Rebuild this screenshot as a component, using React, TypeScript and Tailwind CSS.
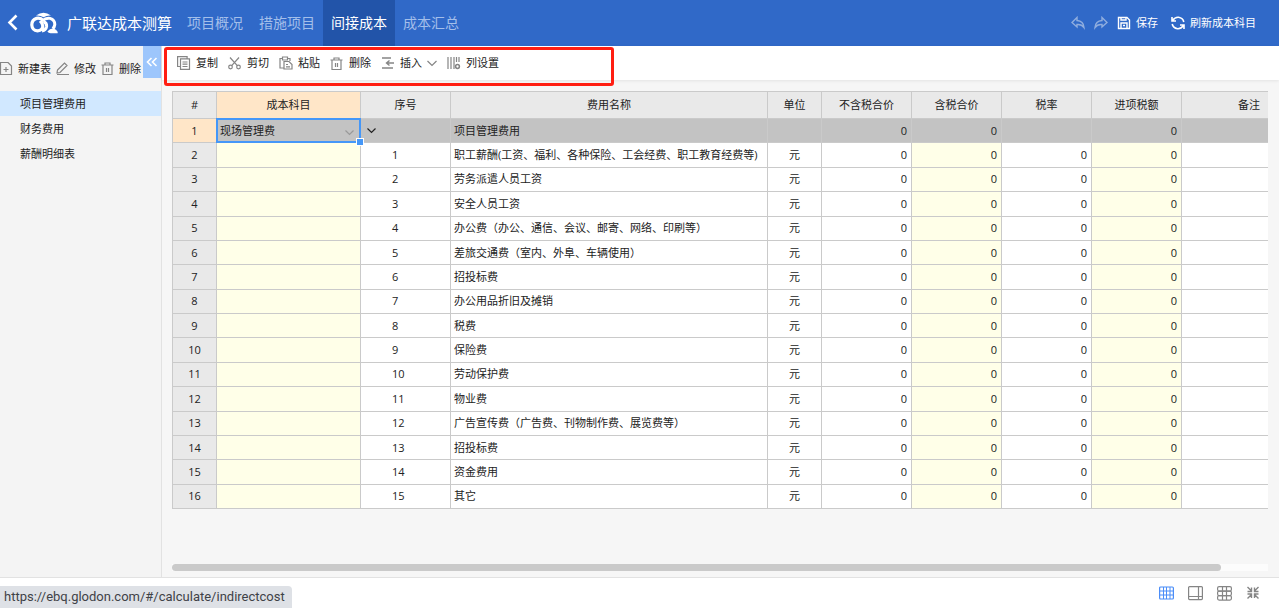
import React from "react";

type IconProps = { children: React.ReactNode; className?: string; box?: string };

function Icon({ children, className = "size-[14px]", box = "0 0 14 14" }: IconProps) {
  return (
    <svg viewBox={box} fill="none" stroke="currentColor" strokeWidth="1.2" className={"shrink-0 " + className} aria-hidden="true">
      {children}
    </svg>
  );
}

const Trash = () => (
  <Icon className="size-[13px]" box="0 0 13 13">
    <path d="M0.5 3h12M4 3V1h5v2M2 3v9.500h9V3M5.500 6v4M7.500 6v4" />
  </Icon>
);

const Logo = () => (
  <svg viewBox="0 0 28 22" fill="none" stroke="#fff" className="h-[22px] w-[28px] shrink-0" aria-hidden="true">
    <path d="M6 3.600Q13.500 -2 21 3.600Q17 3.200 13.600 5.200Q10 3.200 6 3.600Z" fill="#fff" stroke="none" />
    <path d="M13.800 9Q10.500 5.500 6.500 6.400 1.800 7.800 1.800 13 2.200 18.500 7.500 18.800 12.800 18.500 12.800 14 12.600 11 10 8.800" strokeWidth="3.200" />
    <path d="M12.500 8.800Q16 5.500 20 6.400 24.800 7.800 24.800 12.500 24.500 15 22.800 16.800M13.500 9.500Q17 11 16.600 14.500 16 18.300 12 19" strokeWidth="3" />
    <path d="M17.400 19.500Q21.500 14.800 25.500 17.500Q28.300 19.600 27.600 21.200H20.500Q18.500 21.200 17.400 19.500Z" fill="#fff" stroke="none" />
  </svg>
);

const tabs = ["项目概况", "措施项目", "间接成本", "成本汇总"];
const sheets = ["项目管理费用", "财务费用", "薪酬明细表"];

const names = [
  "职工薪酬(工资、福利、各种保险、工会经费、职工教育经费等)",
  "劳务派遣人员工资",
  "安全人员工资",
  "办公费（办公、通信、会议、邮寄、网络、印刷等）",
  "差旅交通费（室内、外阜、车辆使用）",
  "招投标费",
  "办公用品折旧及摊销",
  "税费",
  "保险费",
  "劳动保护费",
  "物业费",
  "广告宣传费（广告费、刊物制作费、展览费等）",
  "招投标费",
  "资金费用",
  "其它",
];

const headings = ["#", "成本科目", "序号", "费用名称", "单位", "不含税合价", "含税合价", "税率", "进项税额", "备注"];

const cell = "border-r border-b border-[#cacaca] p-0";
const num = cell + " pr-1 text-right";

function Header() {
  return (
    <header className="flex h-[46px] shrink-0 items-center bg-[#3069c8] text-white">
      <button aria-label="返回" className="ml-[7px] flex">
        <Icon className="h-[18px] w-[12px]" box="0 0 12 18">
          <path d="M9.500 1.500 2.500 8.500l7 7" strokeWidth="2.600" />
        </Icon>
      </button>
      <div className="ml-[11px] flex items-center gap-[9px]">
        <Logo />
        <h1 className="text-[15px] whitespace-nowrap">广联达成本测算</h1>
      </div>
      <nav className="ml-[7px] flex h-full text-[14px] whitespace-nowrap">
        {tabs.map((t) => (
          <a
            key={t}
            href="#"
            className={t === "间接成本" ? "flex items-center bg-[#2254a9] px-2" : "flex items-center px-2 text-[#a4bfea]"}
          >
            {t}
          </a>
        ))}
      </nav>
      <div className="mr-[23px] ml-auto flex items-center gap-[9px] text-[11px] whitespace-nowrap">
        <button aria-label="撤销" className="text-[#8fadde]">
          <Icon>
            <path d="M6 1.500 1 6.500l5 4.500V8.500q4.500-.5 7 3Q12.500 5 6 4.500Z" strokeWidth="1.400" />
          </Icon>
        </button>
        <button aria-label="重做" className="text-[#8fadde]">
          <Icon>
            <path d="M8 1.500 13 6.500 8 11V8.500q-4.500-.5-7 3Q1.500 5 8 4.500Z" strokeWidth="1.400" />
          </Icon>
        </button>
        <button className="flex items-center gap-[5px]">
          <Icon>
            <path d="M2 1.500h8l2.500 2.500v8.500H1.500V1.500ZM4 1.500V4h5V1.500M4 12.500V7h6v5.500M6 9.500h2" strokeWidth="1.400" />
          </Icon>
          保存
        </button>
        <button className="ml-1 flex items-center gap-[5px]">
          <Icon>
            <path d="M1 1v4h4M13 13V9H9M1.500 4.500Q4 1 7.500 1.300 12 2 12.800 6M12.500 9.500Q10 13 6.500 12.700 2 12 1.200 8" strokeWidth="1.600" />
          </Icon>
          刷新成本科目
        </button>
      </div>
    </header>
  );
}

function Sidebar() {
  return (
    <aside className="flex w-[162px] shrink-0 flex-col border-r border-[#e2e2e2] bg-[#f4f4f4]">
      <div className="flex h-[45px] items-start">
        <div className="flex h-full flex-1 items-center gap-[5px] whitespace-nowrap">
          <button className="flex items-center gap-[5px]">
            <span className="text-[#858585]">
              <Icon className="size-[13px]" box="0 0 13 13">
                <path d="M0.500 .5h7.500l3.500 3.500v8.500H.5ZM3.500 7.500h5M6 5v5" />
              </Icon>
            </span>
            新建表
          </button>
          <button className="flex items-center gap-[5px]">
            <span className="text-[#858585]">
              <Icon className="size-[13px]" box="0 0 13 13">
                <path d="M1.500 8 8.500 1l2.500 2.500-7 7-3 .5ZM1 12.500h12" />
              </Icon>
            </span>
            修改
          </button>
          <button className="flex items-center gap-[5px]">
            <span className="text-[#858585]"><Trash /></span>
            删除
          </button>
        </div>
        <button aria-label="收起" className="flex h-8 w-[18px] shrink-0 items-center justify-center bg-[#9dc6fc] text-white">
          <Icon className="size-[12px]" box="0 0 12 12">
            <path d="M5.500 2 1.500 6l4 4M10.500 2l-4 4 4 4" strokeWidth="1.600" />
          </Icon>
        </button>
      </div>
      <nav>
        {sheets.map((s, i) => (
          <a key={s} href="#" className={i === 0 ? "flex h-[25px] items-center bg-[#d1e8ff] pl-5" : "flex h-[25px] items-center pl-5"}>
            {s}
          </a>
        ))}
      </nav>
    </aside>
  );
}

function Tool({ label, icon }: { label: string; icon: React.ReactNode }) {
  return (
    <button className="flex items-center gap-[5px]">
      <span className="flex w-[14px] text-[#858585]">{icon}</span>
      {label}
    </button>
  );
}

function Toolbar() {
  return (
    <div className="relative flex h-[34px] shrink-0 items-center bg-white pl-[15px] whitespace-nowrap shadow-[0_1px_3px_#00000014]">
      <div className="absolute top-px left-[2px] h-[39px] w-[450px] rounded-[3px] border-3 border-[#ff1e12]" />
      <div className="flex items-center gap-[10px]">
        <Tool label="复制" icon={<Icon><path d="M3 10.500H.6V.6h9.500v2M3.500 2.900H12.500v10.500H3.500ZM5.500 6H10.500M5.500 8.200H10.500M5.500 10.500H10.500" /></Icon>} />
        <Tool label="剪切" icon={<Icon><circle cx="2.500" cy="11" r="1.800" /><circle cx="10.500" cy="11" r="1.800" /><path d="M2 1.500 9.300 9.700M11 1.500 3.700 9.700" /></Icon>} />
        <Tool label="粘贴" icon={<Icon><path d="M4.500 12H1V2.500h2.500M8.500 2.500H11V5M3.500 1h5v3h-5ZM5 5.500h5l3 3v4.500H5ZM7 8.500h2M7 10.800h4" /></Icon>} />
        <Tool label="删除" icon={<Trash />} />
        <div className="flex items-center gap-[5px]">
          <Tool label="插入" icon={<Icon><path d="M1 2h9M5.500 7H13M8.500 4.500 5.500 7l3 2.500M1 12h11" strokeWidth="1.400" /></Icon>} />
          <button aria-label="插入选项" className="text-[#858585]">
            <Icon className="size-[10px]" box="0 0 10 10"><path d="M.5 3 5 7.500 9.500 3" /></Icon>
          </button>
        </div>
        <Tool label="列设置" icon={<Icon><path d="M1 1v12M4 1v12M7 1v12M9.500 1v5M12 1v5" /><circle cx="10.500" cy="10.500" r="1.900" strokeWidth="1.500" /></Icon>} />
      </div>
    </div>
  );
}

function Grid() {
  return (
    <div className="overflow-hidden">
      <table className="h-[418px] w-[1145px] table-fixed border-separate border-spacing-0 border-t border-l border-[#cacaca] bg-white whitespace-nowrap">
        <colgroup>
          <col className="w-[44px]" />
          <col className="w-[144px]" />
          <col className="w-[90px]" />
          <col className="w-[317px]" />
          <col className="w-[54px]" />
          <col className="w-[90px]" />
          <col className="w-[90px]" />
          <col className="w-[90px]" />
          <col className="w-[90px]" />
          <col />
        </colgroup>
        <thead>
          <tr className="h-[27px]">
            {headings.map((h) => (
              <th key={h} scope="col" className={(h === "成本科目" ? "bg-[#ffe6c8] " : "bg-[#e9e9e9] ") + cell + " font-normal"}>
                {h}
              </th>
            ))}
          </tr>
        </thead>
        <tbody>
          <tr className="bg-[#c3c3c3]">
            <th scope="row" className={cell + " bg-[#ffe6c8] font-normal"}>1</th>
            <td className={cell + " relative"}>
              <div className="absolute -inset-px flex border-2 border-[#4597f8]">
                <select aria-label="成本科目" defaultValue="现场管理费" className="w-full appearance-none bg-transparent pl-[2px] outline-none">
                  <option>现场管理费</option>
                </select>
                <span className="pointer-events-none absolute top-2 right-[5px] text-[#999]">
                  <Icon className="size-[9px]" box="0 0 9 9"><path d="M.5 2.500 4.500 6.500l4-4" /></Icon>
                </span>
                <span className="absolute -right-[5px] -bottom-[5px] z-10 size-2 border border-white bg-[#4597f8]" />
              </div>
            </td>
            <td className={cell}>
              <button aria-label="折叠" className="ml-[6px] flex">
                <Icon className="size-[9px]" box="0 0 9 9"><path d="M.5 2.500 4.500 6.500l4-4" /></Icon>
              </button>
            </td>
            <td className={cell + " pl-[3px]"}>项目管理费用</td>
            <td className={cell} />
            <td className={num}>0</td>
            <td className={num}>0</td>
            <td className={num} />
            <td className={num}>0</td>
            <td className={cell} />
          </tr>
          {names.map((n, i) => (
            <tr key={i}>
              <th scope="row" className={cell + " bg-[#e9e9e9] font-normal"}>{i + 2}</th>
              <td className={cell + " bg-[#ffffe8]"} />
              <td className={cell + " pl-[31px]"}>{i + 1}</td>
              <td className={cell + " pl-[3px]"}>{n}</td>
              <td className={cell + " text-center"}>元</td>
              <td className={num}>0</td>
              <td className={num + " bg-[#ffffe8]"}>0</td>
              <td className={num}>0</td>
              <td className={num + " bg-[#ffffe8]"}>0</td>
              <td className={cell} />
            </tr>
          ))}
        </tbody>
      </table>
    </div>
  );
}

function Footer() {
  return (
    <footer className="relative flex h-[31px] shrink-0 items-center justify-end gap-[14px] border-t border-[#e2e2e2] bg-white pr-[19px] text-[#858585]">
      <div className="absolute bottom-0 left-0 flex h-[22px] items-center rounded-tr-[4px] bg-[#dee1e6] pr-[7px] pl-1 font-[Roboto,sans-serif] text-[13px] text-[#3f4247]">
        https://ebq.glodon.com/#/calculate/indirectcost
      </div>
      <button aria-label="表格视图" className="text-[#4b8df8]">
        <Icon className="size-[15px]" box="0 0 15 15"><rect x=".6" y="1" width="13.800" height="12" rx="1" /><path d="M.5 5h14M.5 9h14M4.500 1v12M7.500 1v12M11 1v12" strokeWidth="1" /></Icon>
      </button>
      <button aria-label="分栏视图">
        <Icon className="size-[15px]" box="0 0 15 15"><rect x=".6" y=".6" width="13.800" height="13" rx="1" /><path d="M10.500 .5v13M.5 10.500h14" /></Icon>
      </button>
      <button aria-label="分组视图">
        <Icon className="size-[15px]" box="0 0 15 15"><rect x=".6" y=".6" width="13.800" height="4.500" rx="1.500" /><rect x=".6" y="5.100" width="13.800" height="4.500" rx="1.500" /><rect x=".6" y="9.600" width="13.800" height="4.500" rx="1.500" /><path d="M5.500 .6v13.500M9.500 .6v13.500" /></Icon>
      </button>
      <button aria-label="退出全屏">
        <Icon><path d="M1.500 1l4 4M5.500 1.500v4h-4M12.500 1l-4 4M8.500 1.500v4h4M1.500 12.500l4-4M5.500 12v-4h-4M12.500 12.500l-4-4M8.500 12v-4h4" strokeWidth="1.400" /></Icon>
      </button>
    </footer>
  );
}

export default function App() {
  return (
    <div className="flex min-h-screen flex-col bg-[#f6f6f6] font-['Open_Sans','Noto_Sans_CJK_SC',sans-serif] text-[11px] leading-4 text-[#222]">
      <Header />
      <div className="flex flex-1">
        <Sidebar />
        <main className="flex min-w-0 flex-1 flex-col">
          <Toolbar />
          <div className="flex flex-1 flex-col pt-[11px] pr-[11px] pb-[6px] pl-[10px]">
            <Grid />
            <div className="mt-auto h-[7px] bg-[#fcfcfc]">
              <div className="h-full w-[95.7%] rounded-full bg-[#cacaca]" />
            </div>
          </div>
        </main>
      </div>
      <Footer />
    </div>
  );
}
